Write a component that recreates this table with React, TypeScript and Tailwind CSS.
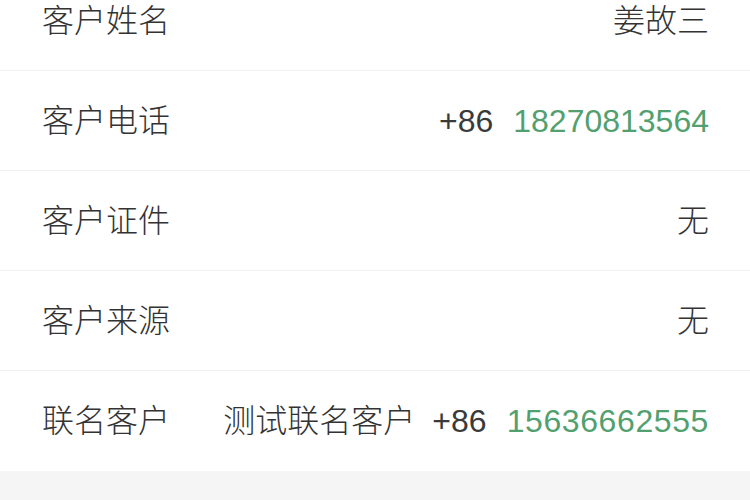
import React from "react";

const font = { fontFamily: '"Liberation Sans", "Noto Sans CJK SC", sans-serif' };

function Row({ label, children, last }: { label: string; children: React.ReactNode; last?: boolean }) {
  return (
    <div className={`flex h-[100px] items-center justify-between pl-[42px] pr-[41px] bg-white ${last ? "" : "border-b border-[#f0f0f0]"}`}>
      <span className="text-[32px] font-light text-[#333333] leading-none">{label}</span>
      <div className="flex items-center text-[32px] font-light leading-none text-[#333333]">{children}</div>
    </div>
  );
}

export default function App() {
  return (
    <div className="w-[750px] h-[500px] overflow-hidden bg-[#f5f5f5]" style={font}>
      <div className="-mt-[29px] bg-white">
        <Row label="客户姓名">
          <span>姜故三</span>
        </Row>
        <Row label="客户电话">
          <span className="text-[#3a3a3a]">+86</span>
          <span className="ml-[20px] text-[#52a06f]">18270813564</span>
        </Row>
        <Row label="客户证件">
          <span>无</span>
        </Row>
        <Row label="客户来源">
          <span>无</span>
        </Row>
        <Row label="联名客户" last>
          <span>测试联名客户</span>
          <span className="ml-[17px] text-[#3a3a3a]">+86</span>
          <span className="ml-[20px] tracking-[0.6px] text-[#52a06f]">15636662555</span>
        </Row>
      </div>
    </div>
  );
}
